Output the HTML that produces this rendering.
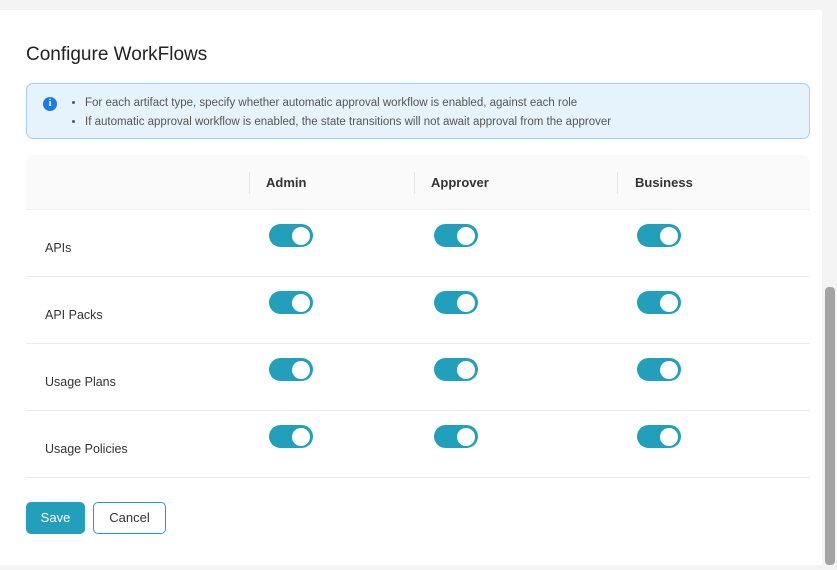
<!DOCTYPE html>
<html><head><style>
*{box-sizing:border-box;margin:0;padding:0}
body{width:837px;height:570px;background:#f4f4f4;font-family:"Liberation Sans",sans-serif;position:relative;overflow:hidden;color:#222}
.panel{position:absolute;left:0;top:10px;width:822px;height:555px;background:#fff}
.sb{position:absolute;left:825px;top:287px;width:10px;height:278px;background:#a3a3a3;border-radius:4px}
h1{position:absolute;left:26px;top:44px;font-size:19px;font-weight:normal;color:#222}
.info{position:absolute;left:26px;top:83px;width:784px;height:56px;background:#e6f3fd;border:1px solid #9fd0f7;border-radius:7px;font-size:11.5px;color:#555}
.info .i{position:absolute;left:16px;top:13px;width:14px;height:14px;border-radius:50%;background:#1a7ce8;color:#fff;font-size:10px;font-weight:bold;text-align:center;line-height:14px;font-family:"Liberation Serif",serif}
.info ul{position:absolute;left:58px;top:10px;list-style:disc}
.info li{line-height:19px}
.th{position:absolute;left:26px;top:155px;width:784px;height:55px;background:#fafafa;border-radius:8px 8px 0 0;border-bottom:1px solid #eee}
.th span{position:absolute;top:20px;font-size:13px;font-weight:bold;color:#333}
.sep{position:absolute;top:17px;width:1px;height:22px;background:#e5e5e5}
.row{position:absolute;left:26px;width:784px;height:67px;border-bottom:1px solid #ebebeb}
.row .l{position:absolute;left:19px;top:31px;font-size:12.5px;color:#333}
.tg{position:absolute;top:14px;width:44px;height:23px;border-radius:12px;background:#229fbb}
.tg:after{content:"";position:absolute;right:3px;top:2.5px;width:18px;height:18px;border-radius:50%;background:#fff}
.btn{position:absolute;top:502px;height:32px;border-radius:5px;font-size:13px;text-align:center;line-height:32px}
</style></head><body>
<div class="panel"></div>
<div class="sb"></div>
<h1>Configure WorkFlows</h1>
<div class="info"><div class="i">i</div><ul>
<li>For each artifact type, specify whether automatic approval workflow is enabled, against each role</li>
<li>If automatic approval workflow is enabled, the state transitions will not await approval from the approver</li></ul></div>
<div class="th"><div class="sep" style="left:223px"></div><span style="left:240px">Admin</span><div class="sep" style="left:388px"></div><span style="left:405px">Approver</span><div class="sep" style="left:591px"></div><span style="left:609px">Business</span></div>
<div class="row" style="top:210px"><span class="l">APIs</span><div class="tg" style="left:243px"></div><div class="tg" style="left:408px"></div><div class="tg" style="left:611px"></div></div>
<div class="row" style="top:277px"><span class="l">API Packs</span><div class="tg" style="left:243px"></div><div class="tg" style="left:408px"></div><div class="tg" style="left:611px"></div></div>
<div class="row" style="top:344px"><span class="l">Usage Plans</span><div class="tg" style="left:243px"></div><div class="tg" style="left:408px"></div><div class="tg" style="left:611px"></div></div>
<div class="row" style="top:411px"><span class="l">Usage Policies</span><div class="tg" style="left:243px"></div><div class="tg" style="left:408px"></div><div class="tg" style="left:611px"></div></div>
<div class="btn" style="left:26px;width:59px;background:#229fbb;color:#fff">Save</div>
<div class="btn" style="left:93px;width:73px;border:1px solid #229fbb;color:#333;line-height:30px">Cancel</div>
</body></html>
